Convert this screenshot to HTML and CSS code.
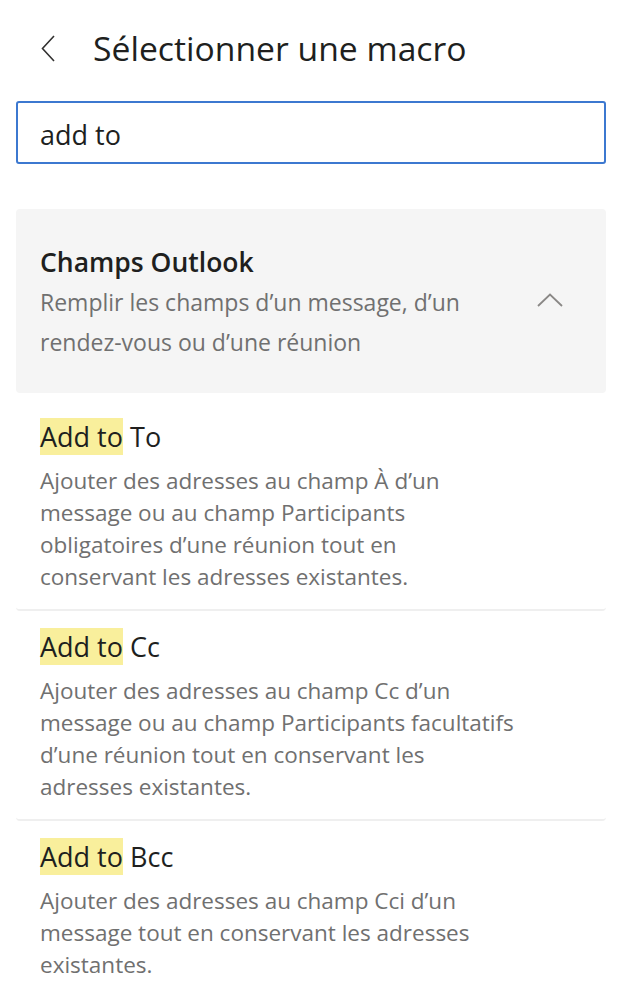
FILE: index.html
```html
<!DOCTYPE html>
<html lang="fr">
    <head>
        <meta charset="UTF-8">
        <meta name="viewport" content="width=device-width, initial-scale=1.0">
        <title>Sélectionner une macro</title>
        <link rel="stylesheet" href="styles.css">
    </head>
    <body>
        <div class="panel">
            <header class="header">
                <button class="back" aria-label="Retour">
                    <svg width="14" height="27" viewBox="0 0 14 27">
                        <path d="M13 1 L1.5 13.5 L13 26" fill="none" stroke="#323130" stroke-width="1.6"/>
                    </svg>
                </button>
                <h1>Sélectionner une macro</h1>
            </header>

            <input class="search" type="text" value="add to">

            <!-- Groupe -->
            <div class="group">
                <div class="group-text">
                    <h2>Champs Outlook</h2>
                    <p>Remplir les champs d’un message, d’un rendez-vous ou d’une réunion</p>
                </div>
                <svg class="chevron" width="26" height="14" viewBox="0 0 26 14">
                    <path d="M1 13 L13 1.5 L25 13" fill="none" stroke="#8a8886" stroke-width="1.8"/>
                </svg>
            </div>

            <ul class="macros">
                <li class="macro">
                    <h3><mark>Add to</mark> To</h3>
                    <p>Ajouter des adresses au champ À d’un message ou au champ Participants obligatoires d’une réunion tout en conservant les adresses existantes.</p>
                </li>
                <li class="macro">
                    <h3><mark>Add to</mark> Cc</h3>
                    <p>Ajouter des adresses au champ Cc d’un message ou au champ Participants facultatifs d’une réunion tout en conservant les adresses existantes.</p>
                </li>
                <li class="macro">
                    <h3><mark>Add to</mark> Bcc</h3>
                    <p>Ajouter des adresses au champ Cci d’un message tout en conservant les adresses existantes.</p>
                </li>
            </ul>
        </div>
    </body>
</html>
```

FILE: styles.css
```css
body {
    margin: 0;
    background: #fff;
    font-family: "Open Sans", "Noto Sans", sans-serif;
    color: #201f1e;
}
.panel {
    padding: 0 22px 0 16px;
}
.header {
    display: flex;
    align-items: center;
    height: 96px;
    padding-left: 25px;
}
.back {
    display: flex;
    padding: 0;
    border: none;
    background: none;
    margin-right: 38px;
    cursor: pointer;
}
.header h1 {
    margin: 0;
    font-size: 33.7px;
    font-weight: 400;
    line-height: 40px;
}
.search {
    display: block;
    width: 100%;
    height: 63px;
    margin: 5px 0 0;
    padding: 4px 22px 0;
    box-sizing: border-box;
    border: 2px solid #3c78d0;
    border-radius: 3px;
    font-family: inherit;
    font-size: 27px;
    color: #201f1e;
    outline: none;
}

.group {
    display: flex;
    align-items: center;
    margin-top: 45px;
    padding: 35px 43px 31px 24px;
    background: #f5f5f5;
    border-radius: 4px;
}
.group-text {
    flex: 1;
    min-width: 0;
}
.group h2 {
    margin: 0 0 2px;
    font-size: 26.5px;
    font-weight: 600;
    line-height: 36px;
}
.group p {
    margin: 0;
    max-width: 470px;
    font-size: 23px;
    line-height: 40px;
    color: #707070;
}
.chevron {
    margin-bottom: 6px;
}

.macros {
    list-style: none;
    margin: 0;
    padding: 0;
}
.macro {
    padding: 18px 24px 16px;
    border-bottom: 2px solid #efefef;
    border-radius: 0 0 4px 4px;
}
.macro:first-child {
    padding-top: 26px;
}
.macro:last-child {
    border-bottom: none;
}
.macro h3 {
    margin: 0 0 10px;
    font-size: 27px;
    font-weight: 400;
    line-height: 36px;
}
.macro mark {
    background: #f9ef9c;
    color: inherit;
}
.macro p {
    margin: 0;
    max-width: 476px;
    font-size: 22.5px;
    line-height: 32px;
    color: #707070;
}
```
